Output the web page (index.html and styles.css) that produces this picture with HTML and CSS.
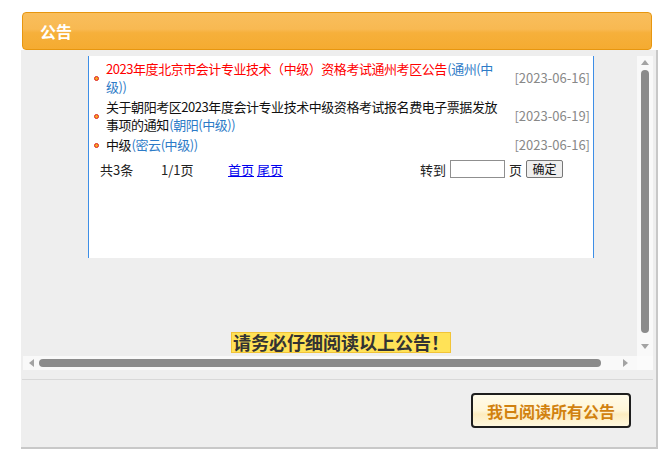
FILE: index.html
```html
<!DOCTYPE html>
<html lang="zh-CN">
<head>
<meta charset="utf-8">
<title>公告</title>
<link rel="stylesheet" href="styles.css">
</head>
<body>
<div class="dialog">
  <div class="hd">公告</div>
  <div class="panel">
    <div class="frame">
      <div class="view">
        <div class="box">
          <table class="list">
            <tr>
              <td class="b"><i class="dot"></i></td>
              <td class="t"><a class="red">2023年度北京市会计专业技术（中级）资格考试通州考区公告</a><span class="area">(通州(中级))</span></td>
              <td class="d">[2023-06-16]</td>
            </tr>
            <tr>
              <td class="b"><i class="dot"></i></td>
              <td class="t"><a class="blk">关于朝阳考区2023年度会计专业技术中级资格考试报名费电子票据发放事项的通知</a><span class="area">(朝阳(中级))</span></td>
              <td class="d">[2023-06-19]</td>
            </tr>
            <tr>
              <td class="b"><i class="dot"></i></td>
              <td class="t"><a class="blk">中级</a><span class="area">(密云(中级))</span></td>
              <td class="d">[2023-06-16]</td>
            </tr>
          </table>
          <div class="pager">
            <span class="c1">共3条</span>
            <span class="c2">1/1页</span>
            <a class="lnk">首页</a>&nbsp;<a class="lnk">尾页</a>
            <span class="go">转到 <input class="pg" type="text"> 页 <button class="ok">确定</button></span>
          </div>
        </div>
        <div class="notice-wrap"><span class="notice">请务必仔细阅读以上公告！</span></div>
      </div>
      <div class="vbar">
        <span class="tri up"></span>
        <span class="vthumb"></span>
        <span class="tri down"></span>
      </div>
      <div class="hbar">
        <span class="tri left"></span>
        <span class="hthumb"></span>
        <span class="tri right"></span>
      </div>
      <div class="corner"></div>
    </div>
    <div class="divider"></div>
    <div class="foot">
      <button class="read">我已阅读所有公告</button>
    </div>
  </div>
</div>
</body>
</html>
```
FILE: styles.css
```css
html, body {
  margin: 0;
  padding: 0;
  background: #ffffff;
}
body {
  font-family: "Noto Sans CJK SC", "Noto Sans", sans-serif;
  font-size: 13px;
  color: #222;
}
.dialog {
  margin: 12px 0 0 21px;
  width: 637px;
}
.hd {
  margin-left: 1px;
  height: 36px;
  border: 1px solid #e7960f;
  border-radius: 4px;
  background: linear-gradient(to bottom, #f9be5c 0%, #f8b952 45%, #f6b03b 55%, #f5ab31 100%);
  color: #fff;
  font-weight: bold;
  font-size: 16px;
  line-height: 36px;
  padding-left: 17px;
  box-sizing: content-box;
  width: 611px;
}
.panel {
  width: 635px;
  background: #eeeeee;
  border-right: 2px solid #c8c8c8;
  border-bottom: 2px solid #c8c8c8;
  padding-top: 6px;
  padding-bottom: 19px;
}
.frame {
  margin-left: 2px;
  width: 630px;
  display: grid;
  grid-template-columns: 614px 16px;
  grid-template-rows: 300px 14px;
}
.view {
  background: #eeeeee;
  overflow: hidden;
}
.box {
  margin-left: 65px;
  width: 504px;
  height: 199px;
  padding-top: 3px;
  background: #fff;
  border-left: 1px solid #3d8ee6;
  border-right: 1px solid #3d8ee6;
}
.list {
  border-collapse: collapse;
  border-spacing: 0;
  width: 504px;
  table-layout: fixed;
}
.list td {
  padding: 1px 0;
  line-height: 18px;
  vertical-align: middle;
}
.list td.b {
  width: 17px;
}
.list td.t {
  width: 399px;
  letter-spacing: -0.45px;
}
.list td.t a {
  margin-right: 0.5px;
}
.list td.d {
  text-align: right;
  padding-right: 3px;
  color: #888;
}
.dot {
  display: block;
  width: 3px;
  height: 3px;
  margin-left: 5px;
  border: 1px solid #e02020;
  border-radius: 50%;
  background: #f5a623;
}
.red {
  color: #ff0000;
}
.blk {
  color: #111;
}
.area {
  color: #2d7bc7;
}
.pager {
  display: flex;
  align-items: center;
  margin-top: 5px;
  height: 18px;
  padding-left: 11px;
  padding-right: 30px;
}
.c1 {
  width: 61px;
}
.c2 {
  width: 67px;
}
.lnk {
  color: #0000ee;
  text-decoration: underline;
}
.go {
  margin-left: auto;
  display: flex;
  align-items: center;
}
.pg {
  width: 55px;
  height: 18px;
  box-sizing: border-box;
  border: 1px solid #8f8f8f;
  margin: 0 4px;
  padding: 0;
}
.ok {
  width: 37px;
  height: 18px;
  box-sizing: border-box;
  border: 1px solid #777;
  border-radius: 2px;
  background: #efefef;
  font-family: inherit;
  font-size: 12px;
  line-height: 14px;
  padding: 0;
  margin-left: 4px;
  color: #111;
}
.notice-wrap {
  margin-left: 65px;
  width: 506px;
  margin-top: 74px;
  text-align: center;
}
.notice {
  display: inline-block;
  background: #ffe257;
  border: 1px solid #f2c437;
  color: #333;
  font-weight: bold;
  font-size: 18px;
  line-height: 19px;
  padding: 0 1px;
}
.vbar {
  background: #f9f9f9;
  display: flex;
  flex-direction: column;
  align-items: center;
}
.vthumb {
  display: block;
  width: 8px;
  height: 263px;
  margin-top: 5px;
  border-radius: 4px;
  background: #8b8b8b;
}
.hbar {
  background: #f9f9f9;
  display: flex;
  align-items: center;
}
.hthumb {
  display: block;
  height: 8px;
  width: 562px;
  margin-left: 5px;
  border-radius: 4px;
  background: #8b8b8b;
}
.corner {
  background: #fbfbfb;
}
.tri {
  display: block;
  width: 0;
  height: 0;
}
.tri.up {
  margin-top: 4px;
  border-left: 4px solid transparent;
  border-right: 4px solid transparent;
  border-bottom: 5px solid #a3a3a3;
}
.tri.down {
  margin-top: 11px;
  border-left: 4px solid transparent;
  border-right: 4px solid transparent;
  border-top: 5px solid #a3a3a3;
}
.tri.left {
  margin-left: 6px;
  border-top: 4px solid transparent;
  border-bottom: 4px solid transparent;
  border-right: 5px solid #a3a3a3;
}
.tri.right {
  margin-left: 22px;
  border-top: 4px solid transparent;
  border-bottom: 4px solid transparent;
  border-left: 5px solid #a3a3a3;
}
.divider {
  margin: 9px 0 0 1px;
  width: 631px;
  height: 1px;
  background: #d8d8d8;
}
.foot {
  display: flex;
  justify-content: flex-end;
  padding-top: 13px;
  padding-right: 25px;
}
.read {
  width: 160px;
  height: 35px;
  box-sizing: border-box;
  border: 2px solid #1e1e1e;
  border-radius: 4px;
  background: linear-gradient(to bottom, #fffbea 0%, #fff6d8 50%, #fcecbf 62%, #fff8df 100%);
  color: #d1810f;
  font-family: "Noto Sans CJK SC", sans-serif;
  font-weight: bold;
  font-size: 16px;
  padding: 0;
}
```
